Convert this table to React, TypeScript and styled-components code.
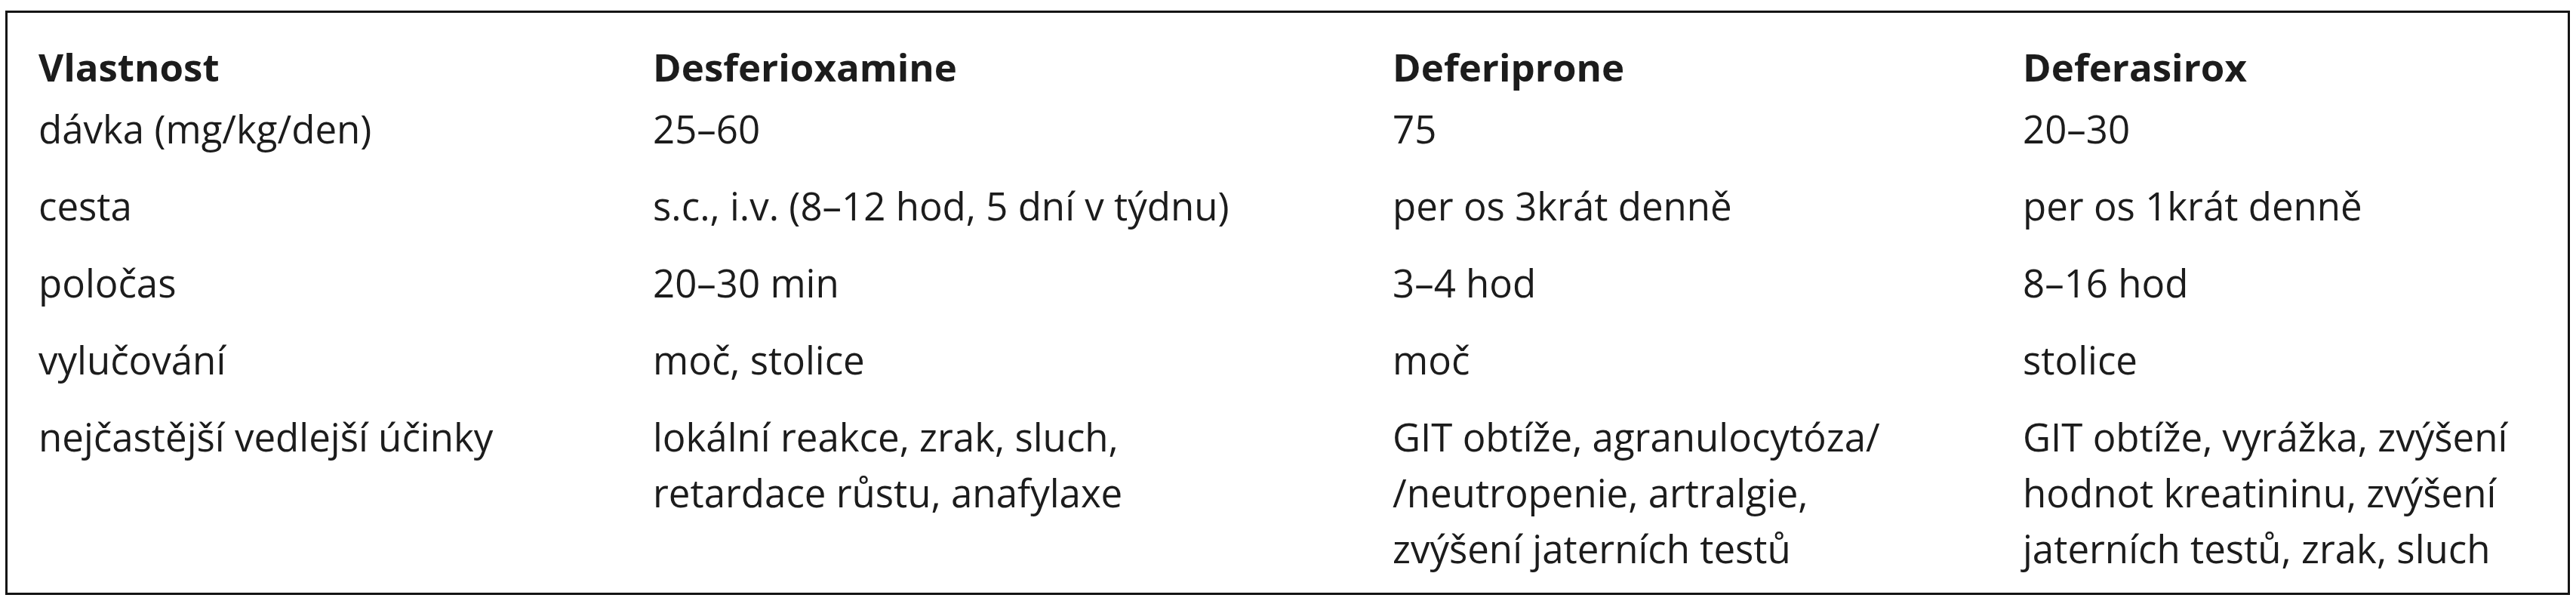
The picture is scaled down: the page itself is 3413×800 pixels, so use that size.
import React from "react";
import styled, { createGlobalStyle } from "styled-components";

const GlobalStyle = createGlobalStyle`
  html, body {
    margin: 0;
    padding: 0;
    background: #fff;
  }
  body {
    font-family: "Open Sans", "Noto Sans", sans-serif;
    color: #1c1c1c;
  }
`;

const COLUMNS = "814px 980px 835px 1fr";

interface RowData {
  label: string;
  cells: string[][];
}

const header = ["Vlastnost", "Desferioxamine", "Deferiprone", "Deferasirox"];

const rows: RowData[] = [
  { label: "dávka (mg/kg/den)", cells: [["25–60"], ["75"], ["20–30"]] },
  {
    label: "cesta",
    cells: [
      ["s.c., i.v. (8–12 hod, 5 dní v týdnu)"],
      ["per os 3krát denně"],
      ["per os 1krát denně"],
    ],
  },
  { label: "poločas", cells: [["20–30 min"], ["3–4 hod"], ["8–16 hod"]] },
  { label: "vylučování", cells: [["moč, stolice"], ["moč"], ["stolice"]] },
  {
    label: "nejčastější vedlejší účinky",
    cells: [
      ["lokální reakce, zrak, sluch,", "retardace růstu, anafylaxe"],
      [
        "GIT obtíže, agranulocytóza/",
        "/neutropenie, artralgie,",
        "zvýšení jaterních testů",
      ],
      [
        "GIT obtíže, vyrážka, zvýšení",
        "hodnot kreatininu, zvýšení",
        "jaterních testů, zrak, sluch",
      ],
    ],
  },
];

const App: React.FC = () => {
  return (
    <Page>
      <GlobalStyle />
      <TableBox>
        <HeaderRow>
          {header.map((h) => (
            <HeadCell key={h}>{h}</HeadCell>
          ))}
        </HeaderRow>
        {rows.map((row, i) => (
          <BodyRow key={row.label} $last={i === rows.length - 1}>
            <Cell>{row.label}</Cell>
            {row.cells.map((lines, j) => (
              <Cell key={j}>
                {lines.map((line) => (
                  <Line key={line}>{line}</Line>
                ))}
              </Cell>
            ))}
          </BodyRow>
        ))}
      </TableBox>
    </Page>
  );
};

export default App;

const Page = styled.div`
  padding: 14px 0 0 7px;
`;

const TableBox = styled.div`
  width: 3398px;
  box-sizing: border-box;
  border: 3px solid #141414;
  padding: 34px 0 22px 41px;
`;

const HeaderRow = styled.div`
  display: grid;
  grid-template-columns: ${COLUMNS};
  padding-bottom: 8px;
`;

const BodyRow = styled.div<{ $last?: boolean }>`
  display: grid;
  grid-template-columns: ${COLUMNS};
  padding-bottom: ${(p) => (p.$last ? "0" : "28px")};
`;

const HeadCell = styled.div`
  font-size: 51px;
  line-height: 74px;
  font-weight: 700;
  white-space: nowrap;
`;

const Cell = styled.div`
  font-size: 51px;
  line-height: 74px;
  font-weight: 400;
  white-space: nowrap;
`;

const Line = styled.div`
  display: block;
`;
